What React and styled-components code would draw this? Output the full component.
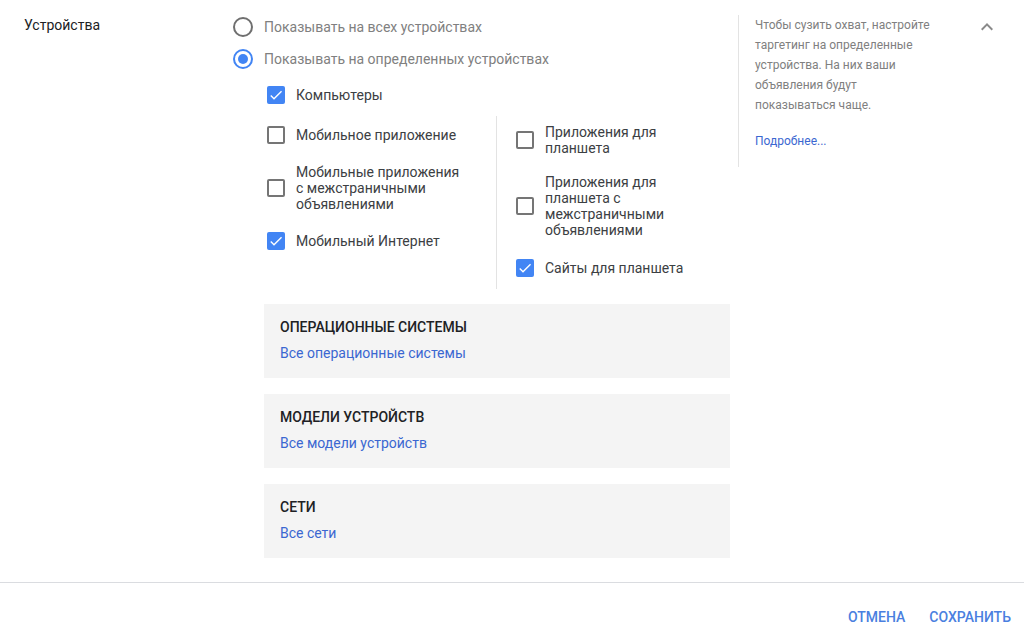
import React from 'react'
import styled, { createGlobalStyle } from "styled-components"

const GlobalStyle = createGlobalStyle`
  body {
    margin: 0;
    background: #fff;
    font-family: Roboto, "Noto Sans", Arial, sans-serif;
  }
`

const leftItems = [
    { label: "Мобильное приложение", checked: false },
    { label: "Мобильные приложения с межстраничными объявлениями", checked: false },
    { label: "Мобильный Интернет", checked: true },
]

const rightItems = [
    { label: "Приложения для планшета", checked: false },
    { label: "Приложения для планшета с межстраничными объявлениями", checked: false },
    { label: "Сайты для планшета", checked: true },
]

const panels = [
    { title: "Операционные системы", link: "Все операционные системы" },
    { title: "Модели устройств", link: "Все модели устройств" },
    { title: "Сети", link: "Все сети" },
]

const helpLines = [
    "Чтобы сузить охват, настройте",
    "таргетинг на определенные",
    "устройства. На них ваши",
    "объявления будут",
    "показываться чаще.",
]

function Radio({ selected, label }) {
    return (
        <RadioRow>
            <IconBox>
                <RadioCircle selected={selected} />
            </IconBox>
            <RadioLabel>{label}</RadioLabel>
        </RadioRow>
    )
}

function Checkbox({ checked, label, wide }) {
    return (
        <CheckRow>
            <IconBox>
                <Box checked={checked}>
                    {checked && (
                        <svg width="16" height="16" viewBox="0 0 24 24">
                            <path fill="#fff" d="M9 16.17L4.83 12l-1.42 1.41L9 19 21 7l-1.41-1.41z" />
                        </svg>
                    )}
                </Box>
            </IconBox>
            <CheckLabel wide={wide}>{label}</CheckLabel>
        </CheckRow>
    )
}

function App() {
    return (
        <Page>
            <GlobalStyle />
            <Section>
                <Label>Устройства</Label>
                <Main>
                    <Radio label="Показывать на всех устройствах" />
                    <Radio selected label="Показывать на определенных устройствах" />
                    <Devices>
                        <Checkbox checked label="Компьютеры" />
                        <Columns>
                            <Column first>
                                {leftItems.map(item => (
                                    <Checkbox key={item.label} {...item} wide />
                                ))}
                            </Column>
                            <Column>
                                {rightItems.map(item => (
                                    <Checkbox key={item.label} {...item} />
                                ))}
                            </Column>
                        </Columns>
                        {panels.map(p => (
                            <Panel key={p.title}>
                                <PanelTitle>{p.title}</PanelTitle>
                                <Link>{p.link}</Link>
                            </Panel>
                        ))}
                    </Devices>
                </Main>
                <Help>
                    <HelpText>
                        {helpLines.map(line => (
                            <HelpLine key={line}>{line}</HelpLine>
                        ))}
                    </HelpText>
                    <HelpLink>Подробнее...</HelpLink>
                </Help>
                <Collapse>
                    <svg width="24" height="24" viewBox="0 0 24 24">
                        <path fill="#8a8a8a" d="M7.41 15.41L12 10.83l4.59 4.58L18 14l-6-6-6 6z" />
                    </svg>
                </Collapse>
            </Section>
            <Footer>
                <TextButton>Отмена</TextButton>
                <TextButton>Сохранить</TextButton>
            </Footer>
        </Page>
    )
}

const Page = styled.div`
    width: 1024px;
    min-height: 633px;
    display: flex;
    flex-direction: column;
`
const Section = styled.div`
    display: flex;
    align-items: flex-start;
    padding: 15px 0 24px 24px;
    border-bottom: 1px solid #dadce0;
`
const Label = styled.div`
    width: 207px;
    flex-shrink: 0;
    font-size: 14px;
    line-height: 20px;
    color: #202124;
`
const Main = styled.div`
    width: 499px;
    margin-right: 8px;
    display: flex;
    flex-direction: column;
    gap: 8px;
`
const RadioRow = styled.div`
    display: flex;
    align-items: center;
    height: 24px;
    gap: 9px;
`
const IconBox = styled.div`
    width: 24px;
    height: 24px;
    flex-shrink: 0;
    display: flex;
    align-items: center;
    justify-content: center;
`
const RadioCircle = styled.div`
    width: 20px;
    height: 20px;
    box-sizing: border-box;
    border-radius: 50%;
    border: 2px solid ${p => p.selected ? "#4285f4" : "#6f6f6f"};
    display: flex;
    align-items: center;
    justify-content: center;
    &::after {
        content: "";
        display: ${p => p.selected ? "block" : "none"};
        width: 10px;
        height: 10px;
        border-radius: 50%;
        background: #4285f4;
    }
`
const RadioLabel = styled.span`
    font-size: 14px;
    color: #808080;
`
const Devices = styled.div`
    margin-left: 33px;
    margin-top: 4px;
    display: flex;
    flex-direction: column;
`
const CheckRow = styled.div`
    display: flex;
    align-items: center;
    gap: 8px;
`
const Box = styled.div`
    width: 18px;
    height: 18px;
    box-sizing: border-box;
    border-radius: 2px;
    background: ${p => p.checked ? "#4285f4" : "transparent"};
    border: ${p => p.checked ? "none" : "2px solid #757575"};
    display: flex;
    align-items: center;
    justify-content: center;
`
const CheckLabel = styled.span`
    width: ${p => p.wide ? "168px" : "152px"};
    font-size: 14px;
    line-height: 16px;
    color: #3c4043;
`
const Columns = styled.div`
    display: grid;
    grid-template-columns: 232px 1fr;
    width: 466px;
    margin-top: 9px;
`
const Column = styled.div`
    display: flex;
    flex-direction: column;
    gap: ${p => p.first ? "17px" : "18px"};
    padding: ${p => p.first ? "7px 0 9px" : "8px 0 9px 16px"};
    border-left: ${p => p.first ? "none" : "1px solid #e3e3e3"};
`
const Panel = styled.div`
    width: 466px;
    box-sizing: border-box;
    margin-top: 15px;
    padding: 13px 16px 15px;
    background: #f4f4f4;
    display: flex;
    flex-direction: column;
    gap: 6px;
    & + & {
        margin-top: 16px;
    }
`
const PanelTitle = styled.div`
    font-size: 14px;
    line-height: 20px;
    font-weight: 500;
    text-transform: uppercase;
    color: #202124;
`
const Link = styled.a`
    font-size: 14px;
    line-height: 20px;
    color: #3b67d1;
    cursor: pointer;
`
const Help = styled.div`
    border-left: 1px solid #e3e3e3;
    padding: 0 0 16px 16px;
    width: 204px;
    display: flex;
    flex-direction: column;
    gap: 16px;
`
const HelpText = styled.div`
    font-size: 12px;
    line-height: 20px;
    color: #808080;
`
const HelpLine = styled.div`
    white-space: nowrap;
`
const HelpLink = styled.a`
    font-size: 12px;
    line-height: 20px;
    color: #3b67d1;
    cursor: pointer;
`
const Collapse = styled.div`
    margin-left: 16px;
    width: 24px;
    height: 24px;
`
const Footer = styled.div`
    display: flex;
    justify-content: flex-end;
    align-items: center;
    gap: 8px;
    height: 68px;
    padding-right: 5px;
`
const TextButton = styled.button`
    border: none;
    background: none;
    padding: 8px;
    font-family: Roboto, "Noto Sans", Arial, sans-serif;
    font-size: 14px;
    font-weight: 500;
    text-transform: uppercase;
    color: #4a7fe0;
    cursor: pointer;
`

export default App
